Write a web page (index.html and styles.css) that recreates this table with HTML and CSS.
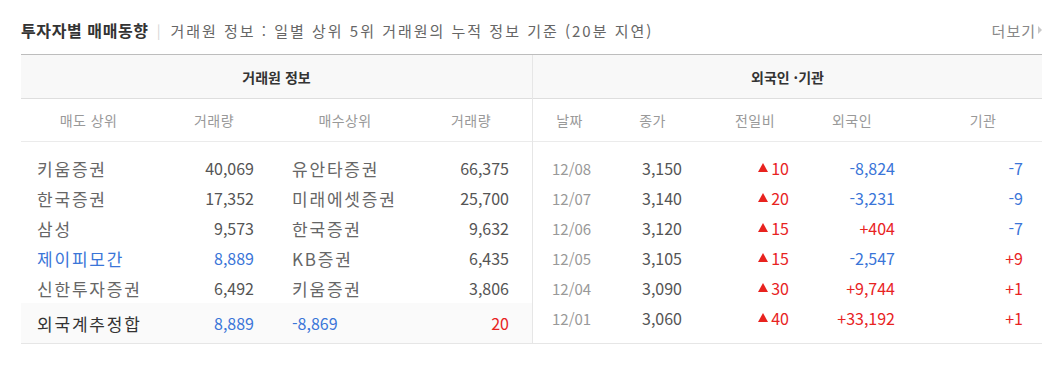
FILE: index.html
```html
<!DOCTYPE html>
<html lang="ko">
<head>
<meta charset="utf-8">
<link rel="stylesheet" href="styles.css">
</head>
<body>
<div class="wrap">
  <div class="title-bar">
    <h2 class="title">투자자별 매매동향</h2>
    <span class="sep">|</span>
    <span class="sub">거래원 정보 : 일별 상위 5위 거래원의 누적 정보 기준 (20분 지연)</span>
    <a class="more">더보기<span class="arr"></span></a>
  </div>
  <div class="tables">
    <div class="tbl left">
      <div class="group-head">거래원 정보</div>
      <div class="col-head row-grid">
        <span>매도 상위</span><span>거래량</span><span>매수상위</span><span class="h4">거래량</span>
      </div>
      <div class="body">
        <div class="row row-grid"><span class="c1">키움증권</span><span class="c2">40,069</span><span class="c3">유안타증권</span><span class="c4">66,375</span></div>
        <div class="row row-grid"><span class="c1">한국증권</span><span class="c2">17,352</span><span class="c3">미래에셋증권</span><span class="c4">25,700</span></div>
        <div class="row row-grid"><span class="c1">삼성</span><span class="c2">9,573</span><span class="c3">한국증권</span><span class="c4">9,632</span></div>
        <div class="row row-grid"><span class="c1 blue">제이피모간</span><span class="c2 blue">8,889</span><span class="c3">KB증권</span><span class="c4">6,435</span></div>
        <div class="row row-grid"><span class="c1">신한투자증권</span><span class="c2">6,492</span><span class="c3">키움증권</span><span class="c4">3,806</span></div>
      </div>
      <div class="foot row-grid"><span class="c1">외국계추정합</span><span class="c2 blue">8,889</span><span class="c3n blue">-8,869</span><span class="c4 red">20</span></div>
    </div>
    <div class="tbl right">
      <div class="group-head">외국인 ·기관</div>
      <div class="col-head rrow-grid">
        <span>날짜</span><span>종가</span><span>전일비</span><span class="h4">외국인</span><span class="h5">기관</span>
      </div>
      <div class="body rbody">
        <div class="row rrow-grid"><span class="d1">12/08</span><span class="d2">3,150</span><span class="d3 red"><i class="up"></i>10</span><span class="d4 blue">-8,824</span><span class="d5 blue">-7</span></div>
        <div class="row rrow-grid"><span class="d1">12/07</span><span class="d2">3,140</span><span class="d3 red"><i class="up"></i>20</span><span class="d4 blue">-3,231</span><span class="d5 blue">-9</span></div>
        <div class="row rrow-grid"><span class="d1">12/06</span><span class="d2">3,120</span><span class="d3 red"><i class="up"></i>15</span><span class="d4 red">+404</span><span class="d5 blue">-7</span></div>
        <div class="row rrow-grid"><span class="d1">12/05</span><span class="d2">3,105</span><span class="d3 red"><i class="up"></i>15</span><span class="d4 blue">-2,547</span><span class="d5 red">+9</span></div>
        <div class="row rrow-grid"><span class="d1">12/04</span><span class="d2">3,090</span><span class="d3 red"><i class="up"></i>30</span><span class="d4 red">+9,744</span><span class="d5 red">+1</span></div>
        <div class="row rrow-grid"><span class="d1">12/01</span><span class="d2">3,060</span><span class="d3 red"><i class="up"></i>40</span><span class="d4 red">+33,192</span><span class="d5 red">+1</span></div>
      </div>
    </div>
  </div>
</div>
</body>
</html>
```
FILE: styles.css
```css
* { box-sizing: border-box; }
body {
  margin: 0;
  background: #fff;
  font-family: "Noto Sans CJK KR", "Noto Sans", sans-serif;
  color: #555;
}
.wrap {
  width: 1042px;
  padding-left: 21px;
}
.title-bar {
  height: 54px;
  padding-top: 6px;
  display: flex;
  align-items: center;
}
.title {
  margin: 0;
  font-size: 16px;
  font-weight: bold;
  color: #333;
  letter-spacing: 0.6px;
  white-space: nowrap;
}
.sep {
  color: #d5d5d5;
  font-size: 14px;
  margin: 0 10px 0 8px;
}
.sub {
  font-size: 15px;
  color: #666;
  letter-spacing: 2px;
  white-space: nowrap;
}
.more {
  margin-left: auto;
  font-size: 15px;
  color: #888;
  display: flex;
  align-items: center;
  letter-spacing: 1px;
}
.arr {
  width: 0;
  height: 0;
  margin-left: 2px;
  border-left: 4px solid #c8c8c8;
  border-top: 4px solid transparent;
  border-bottom: 4px solid transparent;
}
.tables {
  display: flex;
  border-top: 1px solid #bdbdbd;
  border-bottom: 1px solid #e6e6e6;
}
.tbl.left { width: 511px; }
.tbl.right { width: 510px; border-left: 1px solid #e6e6e6; }
.group-head {
  height: 44px;
  background: #f8f8f8;
  border-bottom: 1px solid #dedede;
  font-size: 14px;
  font-weight: bold;
  color: #333;
  display: flex;
  align-items: center;
  justify-content: center;
}
.col-head {
  height: 43px;
  border-bottom: 1px solid #ebebeb;
  font-size: 14px;
  color: #999;
  align-items: center;
  letter-spacing: 0.4px;
}
.col-head span { text-align: center; }
.row-grid {
  display: grid;
  grid-template-columns: 135px 116px 146px 114px;
}
.rrow-grid {
  display: grid;
  grid-template-columns: 73px 93px 112px 100px 131px;
}
.left .col-head .h4 { padding-right: 8px; }
.right .col-head .h4 { padding-right: 18px; }
.right .col-head .h5 { padding-left: 13px; }
.body { padding-top: 11px; }
.rbody { padding-bottom: 10px; }
.row {
  height: 30px;
  align-items: center;
  font-size: 16px;
}
.foot {
  height: 40px;
  align-items: center;
  background: #fafafa;
  font-size: 16px;
}
.c1, .c3 {
  font-size: 17px;
  letter-spacing: 1.8px;
  color: #666;
}
.foot .c1 { color: #333; }
.c1 { padding-left: 16px; }
.c3 { padding-left: 20px; }
.c3n { padding-left: 20px; }
.c2 { text-align: right; padding-right: 18px; }
.c4 { text-align: right; padding-right: 23px; }
.d1 { padding-left: 19px; font-size: 15px; color: #999; }
.d2 { padding-left: 36px; }
.d3 { text-align: right; padding-right: 22px; display: flex; justify-content: flex-end; align-items: center; }
.d4 { text-align: right; padding-right: 16px; }
.d5 { text-align: right; padding-right: 19px; }
.up {
  display: inline-block;
  width: 0;
  height: 0;
  border-left: 5px solid transparent;
  border-right: 5px solid transparent;
  border-bottom: 9px solid #e8231f;
  margin-right: 3px;
  margin-top: -2px;
}
.blue { color: #3a75d8; }
.red { color: #e8231f; }
.c1.blue { color: #3a75d8; }
```
